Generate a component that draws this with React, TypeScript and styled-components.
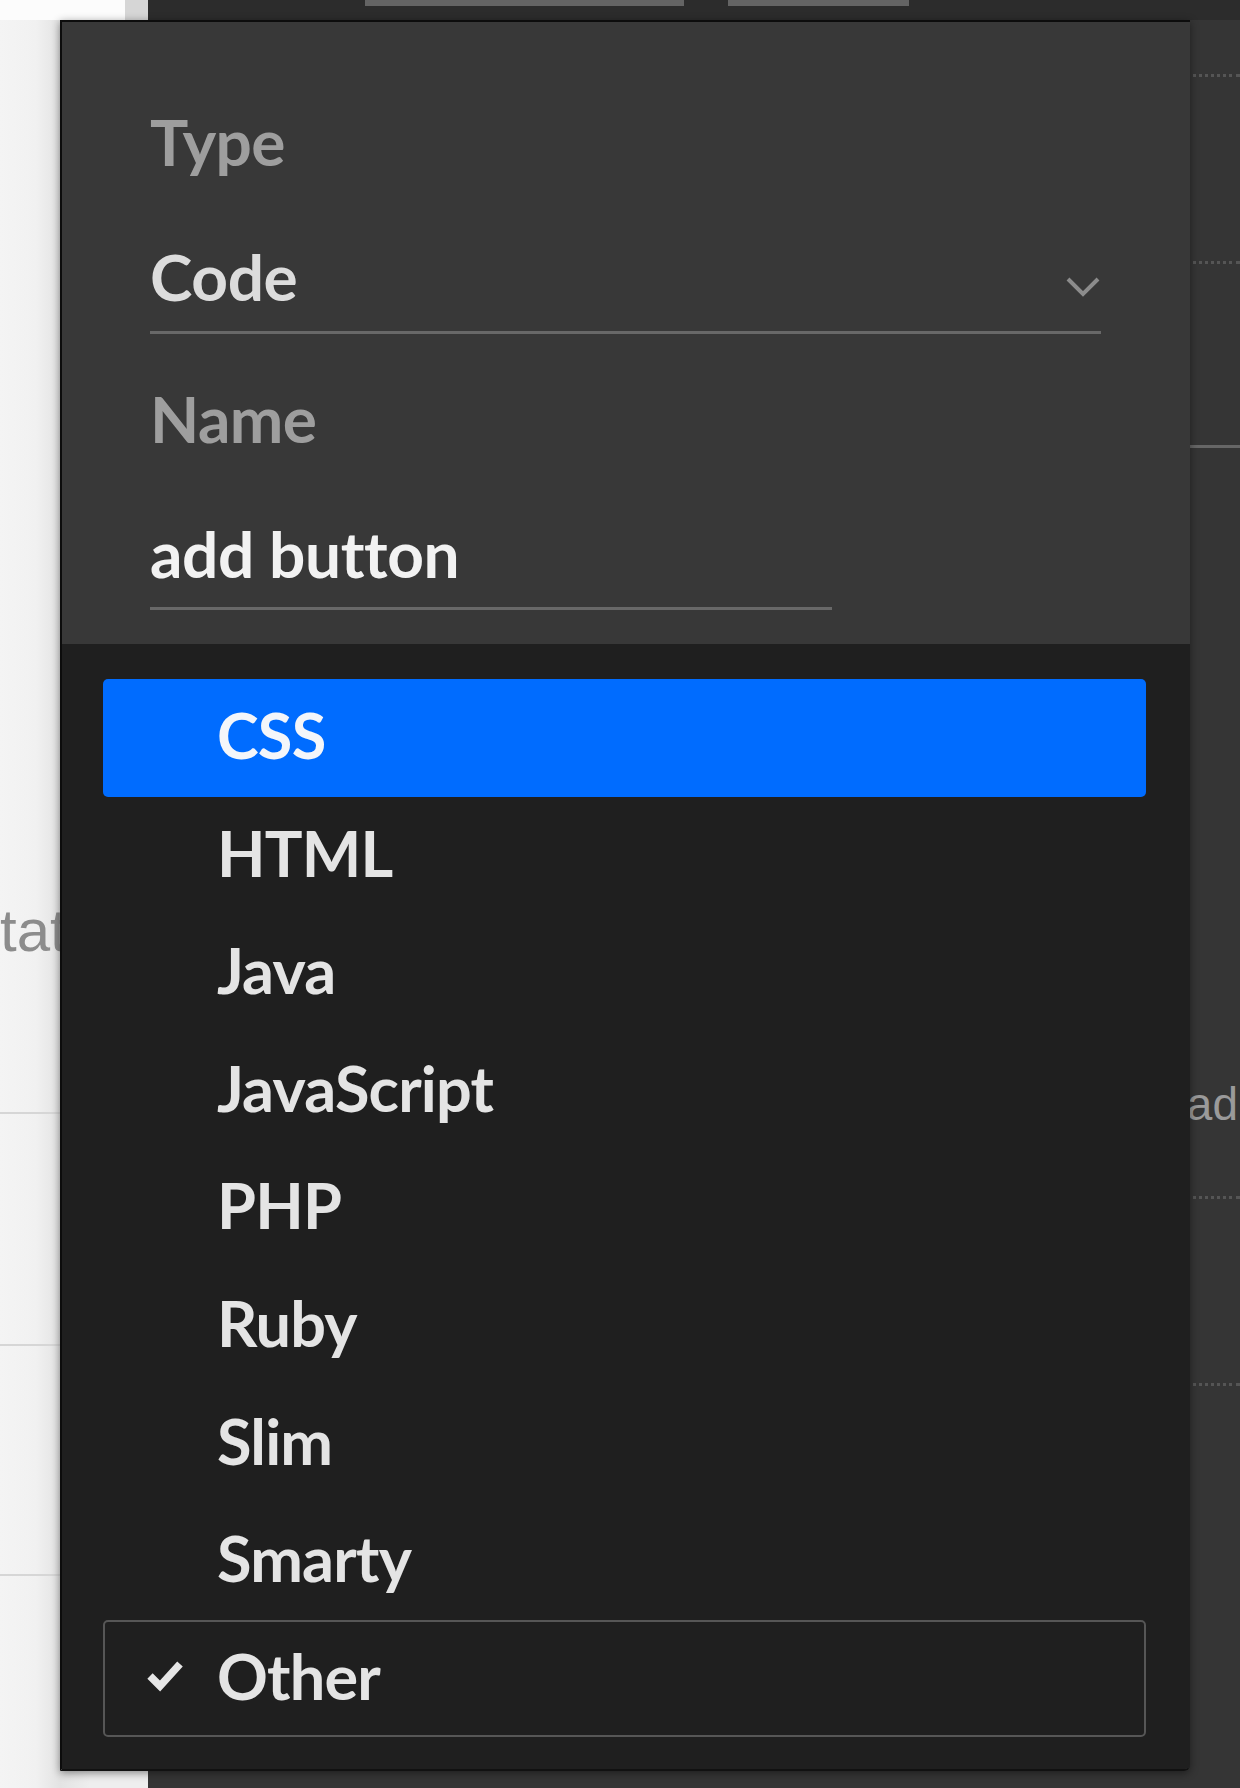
import React from 'react';
import styled, { createGlobalStyle } from 'styled-components';

const GlobalStyle = createGlobalStyle`
    html, body {
        margin: 0;
        padding: 0;
    }
    body {
        width: 1240px;
        height: 1788px;
        overflow: hidden;
        background: #343434;
        font-family: Lato, "Liberation Sans", Arial, sans-serif;
    }
    * {
        box-sizing: border-box;
    }
`;

const languages = ['CSS', 'HTML', 'Java', 'JavaScript', 'PHP', 'Ruby', 'Slim', 'Smarty', 'Other'];

const Chevron = () => (
    <svg width="36" height="22" viewBox="0 0 36 22">
        <polyline points="3,3 18,18 33,3" fill="none" stroke="#8c8c8c" strokeWidth="4" />
    </svg>
);

const Check = () => (
    <svg width="38" height="34" viewBox="0 0 38 34">
        <polyline points="4,17 14,27 34,5" fill="none" stroke="#e6e6e6" strokeWidth="7.5" />
    </svg>
);

const App: React.FC = () => {
    const highlighted = 'CSS';
    const checked = 'Other';

    return (
        <Page>
            <GlobalStyle />
            <LeftPage>
                <LeftCap>
                    <CapWhite />
                    <CapGray />
                </LeftCap>
                <StatusLabel>Status</StatusLabel>
                <LightRule $top={151} />
                <LightRule $top={230} />
                <LightRule $top={228} />
            </LeftPage>

            <AppArea>
                <TopBars>
                    <TopBar $width={319} />
                    <TopBar $width={181} />
                </TopBars>
                <DottedLine $top={54} />
                <DottedLine $top={184} />
                <SolidLine $top={181} />
                <StripText>Upload</StripText>
                <DottedLine $top={64} />
                <DottedLine $top={184} />
            </AppArea>

            <Popover>
                <FormSection>
                    <Field $width={951}>
                        <Label>Type</Label>
                        <ValueRow>
                            <Value $strong={false}>Code</Value>
                            <ChevronBox>
                                <Chevron />
                            </ChevronBox>
                        </ValueRow>
                    </Field>
                    <Field $width={682}>
                        <Label>Name</Label>
                        <ValueRow>
                            <Value $strong>add button</Value>
                        </ValueRow>
                    </Field>
                </FormSection>

                <OptionList>
                    {languages.map((lang) => (
                        <Option
                            key={lang}
                            $active={lang === highlighted}
                            $checked={lang === checked}
                        >
                            <CheckSlot>{lang === checked && <Check />}</CheckSlot>
                            <OptionText>{lang}</OptionText>
                        </Option>
                    ))}
                </OptionList>
            </Popover>
        </Page>
    );
};

const Page = styled.div`
    position: relative;
    display: grid;
    grid-template-columns: 148px 1fr;
    width: 1240px;
    height: 1788px;
    overflow: hidden;
`;

const LeftPage = styled.div`
    display: flex;
    flex-direction: column;
    background: linear-gradient(to right, #f4f4f4 0, #f1f1f1 36px, #e3e3e3 60px, #eeeeee 90px);
    overflow: hidden;
`;

const LeftCap = styled.div`
    display: flex;
    height: 20px;
`;

const CapWhite = styled.div`
    flex: 0 0 125px;
    background: #fcfcfc;
`;

const CapGray = styled.div`
    flex: 1;
    background: #d6d6d6;
`;

const StatusLabel = styled.div`
    margin-top: 881px;
    margin-left: -40px;
    height: 60px;
    font-family: "Liberation Sans", Arial, sans-serif;
    font-size: 60px;
    line-height: 60px;
    color: #8c8c8c;
    white-space: nowrap;
`;

const LightRule = styled.div<{ $top: number }>`
    margin-top: ${(p) => p.$top}px;
    height: 2px;
    background: #d6d6d6;
`;

const AppArea = styled.div`
    display: flex;
    flex-direction: column;
    background: #353535;
`;

const TopBars = styled.div`
    display: flex;
    gap: 44px;
    height: 20px;
    padding-left: 217px;
    background: #2c2c2c;
`;

const TopBar = styled.div<{ $width: number }>`
    width: ${(p) => p.$width}px;
    height: 6px;
    background: #646464;
`;

const DottedLine = styled.div<{ $top: number }>`
    margin-top: ${(p) => p.$top}px;
    border-top: 3px dotted #555555;
`;

const SolidLine = styled.div<{ $top: number }>`
    margin-top: ${(p) => p.$top}px;
    height: 3px;
    background: #666666;
`;

const StripText = styled.div`
    margin-top: 628px;
    padding-right: 2px;
    text-align: right;
    font-family: "Liberation Sans", Arial, sans-serif;
    font-size: 46px;
    line-height: 56px;
    color: #9a9a9a;
`;

const Popover = styled.div`
    position: absolute;
    left: 60px;
    top: 20px;
    width: 1130px;
    height: 1751px;
    display: flex;
    flex-direction: column;
    border-left: 2px solid #0c0c0c;
    border-top: 2px solid #0c0c0c;
    border-bottom: 2px solid #111111;
    border-radius: 0 0 6px 0;
    overflow: hidden;
    box-shadow: 0 2px 8px rgba(0, 0, 0, 0.45);
`;

const FormSection = styled.div`
    display: flex;
    flex-direction: column;
    gap: 45px;
    padding: 80px 0 34px 88px;
    background: #383838;
`;

const Field = styled.div<{ $width: number }>`
    display: flex;
    flex-direction: column;
    gap: 55px;
    width: ${(p) => p.$width}px;
`;

const Label = styled.div`
    font-size: 64px;
    line-height: 80px;
    font-weight: 700;
    letter-spacing: -0.6px;
    color: #9e9e9e;
`;

const ValueRow = styled.div`
    display: flex;
    align-items: center;
    justify-content: space-between;
    padding-bottom: 14px;
    border-bottom: 3px solid #686868;
`;

const Value = styled.div<{ $strong: boolean }>`
    font-size: 64px;
    line-height: 80px;
    font-weight: 700;
    letter-spacing: -0.4px;
    color: ${(p) => (p.$strong ? '#f2f2f2' : '#dcdcdc')};
    margin-bottom: ${(p) => (p.$strong ? '-1px' : '0')};
`;

const ChevronBox = styled.div`
    display: flex;
    margin-top: 20px;
`;

const OptionList = styled.ul`
    flex: 1;
    display: flex;
    flex-direction: column;
    margin: 0;
    padding: 35px 44px 0 41px;
    list-style: none;
    background: #1f1f1f;
`;

const Option = styled.li<{ $active: boolean; $checked: boolean }>`
    display: flex;
    align-items: flex-start;
    height: 117.6px;
    padding-bottom: 5.6px;
    border: 2px solid ${(p) => (p.$checked ? '#565656' : 'transparent')};
    border-radius: 5px;
    background: ${(p) => (p.$active ? '#006cff' : 'transparent')};
    color: ${(p) => (p.$active ? '#f4f6fa' : '#e4e4e4')};
`;

const CheckSlot = styled.div`
    display: flex;
    align-items: center;
    flex: 0 0 112px;
    height: 108px;
    padding-left: 41px;
`;

const OptionText = styled.span`
    font-size: 63px;
    line-height: 108px;
    font-weight: 700;
    letter-spacing: -0.8px;
`;

export default App;
